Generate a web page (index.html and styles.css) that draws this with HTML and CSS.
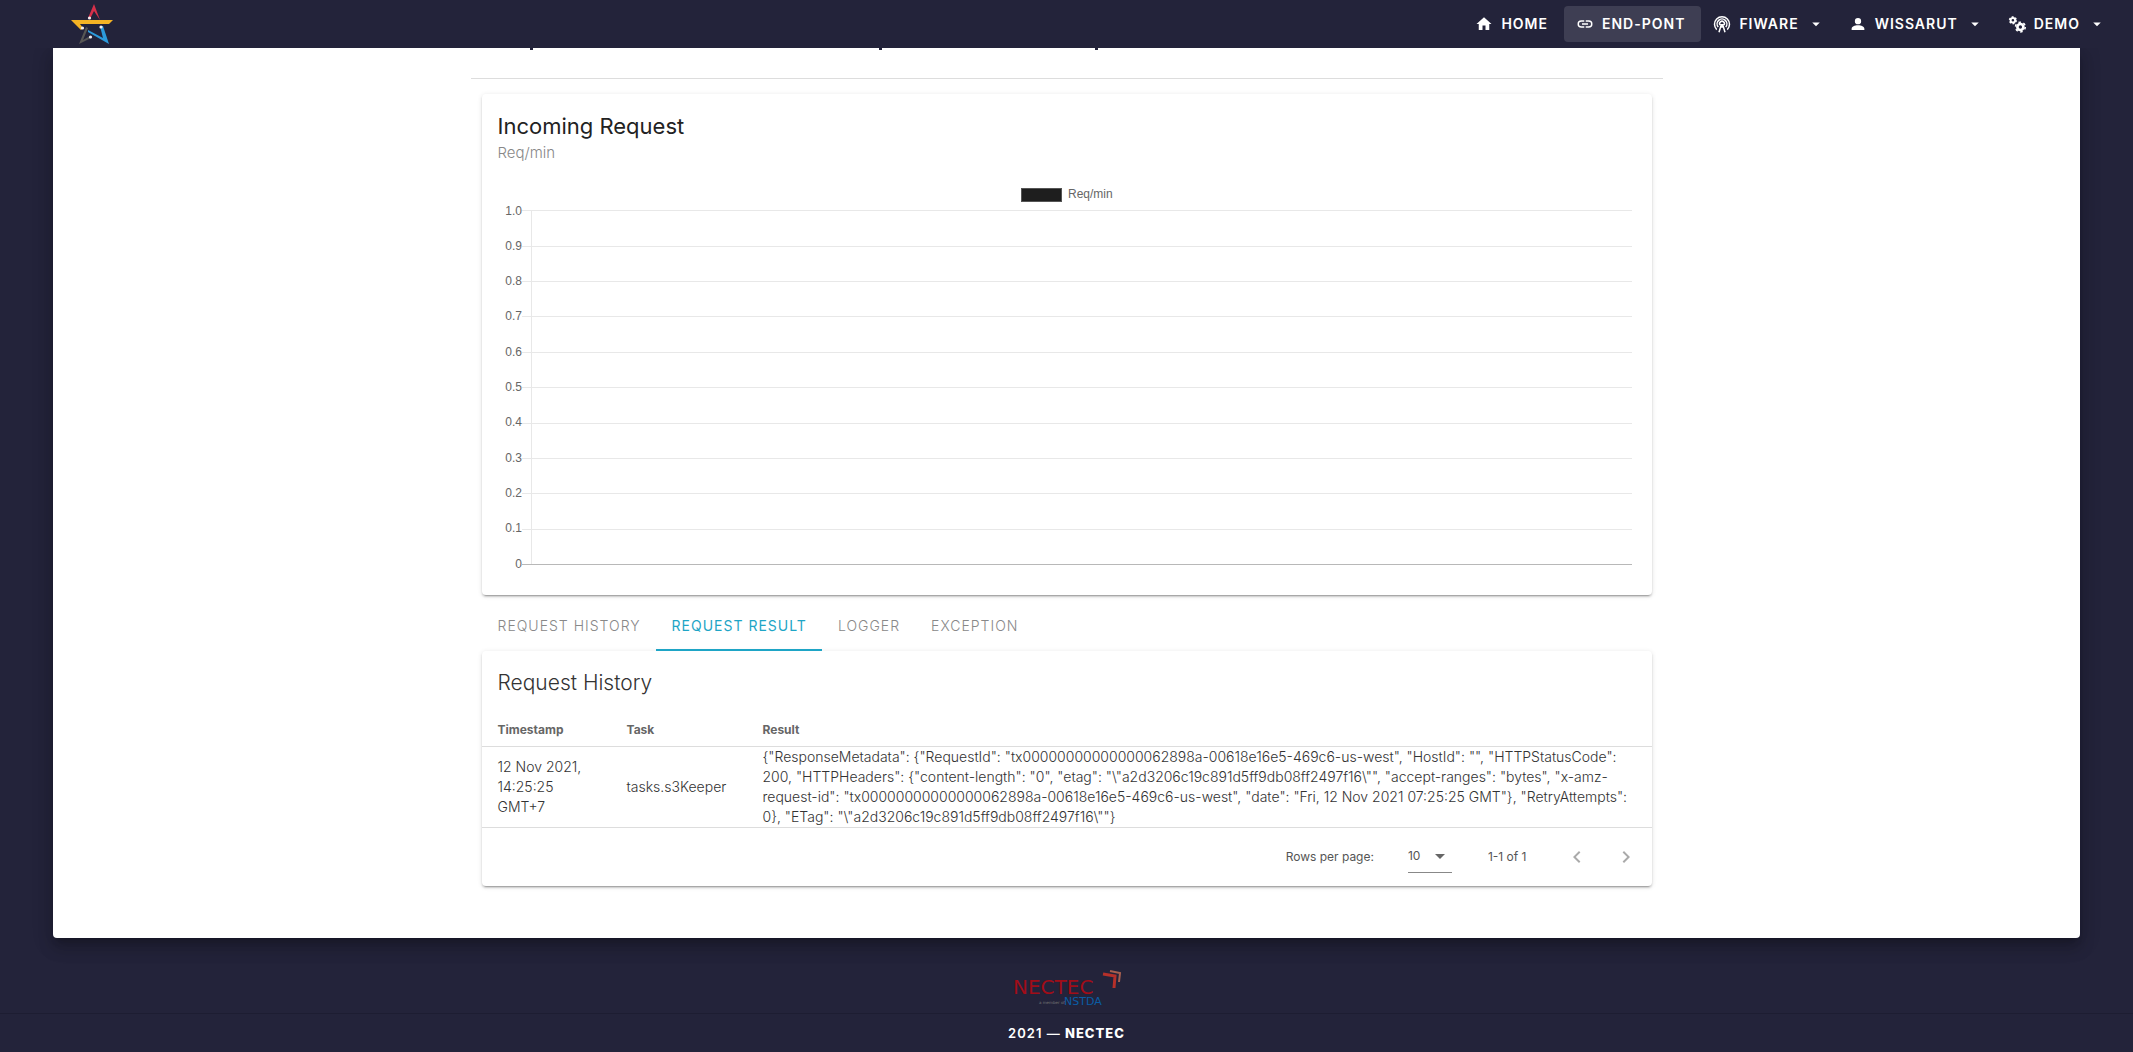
FILE: index.html
```html
<!DOCTYPE html>
<html lang="en">
<head>
<meta charset="utf-8">
<title>End-point</title>
<meta name="viewport" content="width=device-width, initial-scale=1">
<link rel="stylesheet" href="styles.css">
</head>
<body>
<header class="navbar">
  <a class="brand" href="#" aria-label="Start page">
    <svg width="42" height="42" viewBox="0 0 42 42" fill="none">
      <path d="M17 15 23 1l6 16-6-9-4 8z" fill="#d6304a"/>
      <path d="M0 17h42l-4 4H9l3 4-2 2z" fill="#f5b324"/>
      <path d="M15 24 8 41l12-6-1-2-7 4 5-12z" fill="#575654"/>
      <path d="M29 23h3l6 18-21-12v-2l15 8z" fill="#2c9bdc"/>
      <g fill="#f4eef0"><circle cx="18.500" cy="15" r="1.600"/><circle cx="11.500" cy="25" r="1.600"/><circle cx="30" cy="24" r="1.600"/><circle cx="19.500" cy="34" r="1.600"/></g>
    </svg>
  </a>
  <nav class="menu" aria-label="Main">
    <a class="menu-item" href="#">
      <svg class="icon" viewBox="0 0 24 24"><path d="M10 20v-6h4v6h5v-8h3L12 3 2 12h3v8z"/></svg>HOME</a>
    <a class="menu-item active" href="#" aria-current="page">
      <svg class="icon" viewBox="0 0 24 24"><path d="M3.900 12A3.100 3.100 0 0 1 7 8.900h4V7H7a5 5 0 0 0 0 10h4v-1.900H7A3.100 3.100 0 0 1 3.900 12M8 13h8v-2H8zm9-6h-4v1.900h4a3.100 3.100 0 0 1 0 6.200h-4V17h4a5 5 0 0 0 0-10"/></svg>END-PONT</a>
    <button class="menu-item" type="button">
      <svg class="icon" viewBox="0 0 24 24" fill="none" stroke="currentColor" stroke-width="2"><path d="M5 19.500a10 10 0 1 1 14 0M7 16a6.500 6.500 0 1 1 10 0M9.500 13.500a3.200 3.200 0 1 1 5 0M8 23l3-10h2l3 10M12 13v4"/></svg>FIWARE
      <svg class="icon caret" viewBox="0 0 24 24"><path d="m7 10 5 5 5-5z"/></svg></button>
    <button class="menu-item" type="button">
      <svg class="icon" viewBox="0 0 24 24"><path d="M12 4a4.200 4.200 0 1 1 0 8.400A4.200 4.200 0 0 1 12 4m0 9.500c4.500 0 8.500 2 8.500 4.700V20h-17v-1.800c0-2.700 4-4.700 8.500-4.700"/></svg>WISSARUT
      <svg class="icon caret" viewBox="0 0 24 24"><path d="m7 10 5 5 5-5z"/></svg></button>
    <button class="menu-item" type="button">
      <svg class="icon" viewBox="0 0 24 24" fill="none" stroke="currentColor"><circle cx="6.500" cy="7" r="3" stroke-width="2.500"/><circle cx="6.500" cy="7" r="4.500" stroke-width="2" stroke-dasharray="2.400 2.400"/><circle cx="16.500" cy="16" r="4" stroke-width="3.500"/><circle cx="16.500" cy="16" r="6.500" stroke-width="2" stroke-dasharray="3.400 3.400"/></svg>DEMO
      <svg class="icon caret" viewBox="0 0 24 24"><path d="m7 10 5 5 5-5z"/></svg></button>
  </nav>
</header>

<main class="sheet">
  <div class="container">
    <svg class="heading-edge" width="640" height="3" viewBox="0 0 640 3" fill="#23233a" aria-hidden="true"><path d="M59 0h3v2h-3zM408 0h3v2h-3zM624 0h3v2h-3z"/></svg>
    <hr class="rule">
    <section class="card chart-card">
      <h2 class="card-title">Incoming Request</h2>
      <p class="card-subtitle">Req/min</p>
      <svg class="chart" viewBox="0 0 1138 399" role="img" aria-label="Requests per minute">
        <rect x="523.500" y="8.500" width="40" height="13" fill="#1e1e1e" stroke="#555"/>
        <text x="570" y="18">Req/min</text>
        <path class="grid" d="M24 30.500H1134M24 66.500H1134M24 101.500H1134M24 136.500H1134M24 172.500H1134M24 207.500H1134M24 243.500H1134M24 278.500H1134M24 313.500H1134M24 349.500H1134M33.500 30V384"/>
        <path class="baseline" d="M24 384.500H1134"/>
        <g class="ticks">
          <text x="24" y="35">1.0</text><text x="24" y="70">0.9</text><text x="24" y="105">0.8</text><text x="24" y="140">0.7</text><text x="24" y="176">0.6</text><text x="24" y="211">0.5</text><text x="24" y="246">0.4</text><text x="24" y="282">0.3</text><text x="24" y="317">0.2</text><text x="24" y="352">0.1</text><text x="24" y="388">0</text>
        </g>
      </svg>
    </section>

    <div class="tabs" role="tablist">
      <button class="tab" type="button" role="tab">REQUEST HISTORY</button>
      <button class="tab selected" type="button" role="tab" aria-selected="true">REQUEST RESULT</button>
      <button class="tab" type="button" role="tab">LOGGER</button>
      <button class="tab" type="button" role="tab">EXCEPTION</button>
    </div>

    <section class="card">
      <h2 class="table-title">Request History</h2>
      <table class="data">
        <colgroup><col class="col-time"><col class="col-task"><col></colgroup>
        <thead><tr><th scope="col">Timestamp</th><th scope="col">Task</th><th scope="col">Result</th></tr></thead>
        <tbody><tr>
          <td>12 Nov 2021, 14:25:25 GMT+7</td>
          <td>tasks.s3Keeper</td>
          <td class="result">{"ResponseMetadata": {"RequestId": "tx00000000000000062898a-00618e16e5-469c6-us-west", "HostId": "", "HTTPStatusCode": 200, "HTTPHeaders": {"content-length": "0", "etag": "\"a2d3206c19c891d5ff9db08ff2497f16\"", "accept-ranges": "bytes", "x-amz-request-id": "tx00000000000000062898a-00618e16e5-469c6-us-west", "date": "Fri, 12 Nov 2021 07:25:25 GMT"}, "RetryAttempts": 0}, "ETag": "\"a2d3206c19c891d5ff9db08ff2497f16\""}</td>
        </tr></tbody>
      </table>
      <div class="pager">
        <label for="rows">Rows per page:</label>
        <span class="select-wrap">
          <select id="rows"><option>10</option></select>
          <svg class="select-caret" width="24" height="24" viewBox="0 0 24 24"><path d="m7 10 5 5 5-5z"/></svg>
        </span>
        <span class="range">1-1 of 1</span>
        <button class="page-btn" type="button" aria-label="Previous page" disabled><svg width="24" height="24" viewBox="0 0 24 24"><path d="M15.400 16.600 10.800 12l4.600-4.600L14 6l-6 6 6 6z"/></svg></button>
        <button class="page-btn" type="button" aria-label="Next page" disabled><svg width="24" height="24" viewBox="0 0 24 24"><path d="M8.600 16.600 13.200 12 8.600 7.400 10 6l6 6-6 6z"/></svg></button>
      </div>
    </section>
  </div>
</main>

<footer class="footer">
  <div class="footer-logo">
    <svg width="110" height="40" viewBox="0 0 110 40" role="img" aria-label="NECTEC, a member of NSTDA">
      <text class="logo-name" x="1" y="26">NECTEC</text>
      <text class="logo-member" x="27" y="36">a member of</text>
      <text class="logo-parent" x="52" y="37">NSTDA</text>
      <path d="M91 6l12 2-1 12" fill="none" stroke="#b5302a" stroke-width="3"/>
      <path d="M98 3l10 2-1 9" fill="none" stroke="#a8604f" stroke-width="2"/>
    </svg>
  </div>
  <p class="copyright">2021 — <strong>NECTEC</strong></p>
</footer>
</body>
</html>
```
FILE: styles.css
```css
* { box-sizing: border-box; }

body {
  margin: 0;
  background: #23233a;
  color: #333;
  font-family: Inter, "Open Sans", sans-serif;
  font-size: 14px;
  line-height: 20px;
}

h2, p { margin: 0; }
button { border: 0; background: none; font: inherit; color: inherit; cursor: pointer; }

/* Navigation */
.navbar {
  position: sticky;
  top: 0;
  z-index: 2;
  display: flex;
  align-items: center;
  justify-content: space-between;
  height: 48px;
  padding: 0 15px 0 71px;
  background: #23233a;
}
.brand { display: flex; }
.menu { display: flex; }
.menu-item {
  display: flex;
  align-items: center;
  gap: 8px;
  height: 36px;
  padding: 0 16px 0 12px;
  border-radius: 4px;
  color: #fff;
  font-size: 14px;
  font-weight: 600;
  letter-spacing: 1px;
  text-decoration: none;
}
button.menu-item { padding-right: 12px; }
.menu-item.active { background: #3e3e53; }
.icon { width: 18px; height: 18px; fill: currentColor; }
.icon[fill="none"] { fill: none; }

/* Page sheet */
.sheet {
  margin: 0 2.5%;
  padding-bottom: 52px;
  background: #fff;
  border-radius: 0 0 4px 4px;
  box-shadow: 0 6px 7px -4px rgba(0, 0, 0, .2), 0 11px 15px 1px rgba(0, 0, 0, .14), 0 4px 20px 3px rgba(0, 0, 0, .12);
}
.container { max-width: 1192px; margin: 0 auto; }
.heading-edge { display: block; }
.rule { height: 1px; margin: 27px 0 15px; border: 0; background: #ddd; }
.card {
  margin: 0 11px;
  background: #fff;
  border-radius: 4px;
  box-shadow: 0 3px 1px -2px rgba(0, 0, 0, .2), 0 2px 2px rgba(0, 0, 0, .14), 0 1px 5px rgba(0, 0, 0, .12);
}
.chart-card { padding: 16px; }
.card-title { color: #222; font-size: 22px; font-weight: 400; line-height: 32px; }
.card-subtitle { margin-bottom: 16px; color: #888; font-size: 15px; font-weight: 300; line-height: 22px; }

.chart { display: block; width: 100%; font: 12px "Liberation Sans", Arial, sans-serif; fill: #666; }
.grid { stroke: #e8e8e8; fill: none; }
.baseline { stroke: #b8b8b8; }
.ticks { text-anchor: end; }

/* Tabs */
.tabs { display: flex; height: 56px; padding: 0 11px; }
.tab {
  padding: 8px 15px 0 16px;
  border-bottom: 2px solid transparent;
  color: #888;
  font-size: 14px;
  font-weight: 300;
  letter-spacing: 1px;
}
.tab.selected { border-color: #1ea5c6; color: #1ea5c6; font-weight: 400; }

/* Table */
.table-title { padding: 16px; color: #333; font-size: 21px; font-weight: 300; line-height: 32px; }
.data { width: 100%; border-collapse: collapse; table-layout: fixed; }
.col-time { width: 129px; }
.col-task { width: 136px; }
.data th, .data td { padding: 0 16px; border-bottom: 1px solid #ddd; text-align: left; }
.data th { height: 31px; color: #666; font-size: 12px; font-weight: 700; }
.data td { font-weight: 300; }
.data .result { padding-right: 8px; }

.pager {
  display: flex;
  align-items: center;
  justify-content: flex-end;
  height: 58px;
  padding-right: 8px;
  color: #555;
  font-size: 12px;
}
.select-wrap { position: relative; display: flex; margin: 0 36px 0 34px; border-bottom: 1px solid #888; }
.select-wrap select {
  width: 44px;
  height: 32px;
  padding: 0;
  border: 0;
  background: none;
  color: inherit;
  font: inherit;
  appearance: none;
}
.select-caret { position: absolute; top: 4px; right: 0; fill: #666; pointer-events: none; }
.range { margin-right: 32px; }
.page-btn { display: flex; padding: 6px; color: #aaa; }
.page-btn + .page-btn { margin-left: 13px; }
.page-btn svg { fill: currentColor; }

/* Footer */
.footer { color: #fff; text-align: center; }
.footer-logo {
  display: flex;
  align-items: flex-end;
  justify-content: center;
  height: 76px;
  padding-bottom: 5px;
  border-bottom: 1px solid #1d1d32;
}
.logo-name { font: 20px "DejaVu Sans", sans-serif; fill: #a10d18; }
.logo-parent { font: 11px "DejaVu Sans", sans-serif; fill: #0a5ca4; }
.logo-member { font: 4px "DejaVu Sans", sans-serif; fill: #777; }
.copyright { padding: 9px 0 10px; font-size: 13px; font-weight: 600; letter-spacing: 1px; }
.copyright strong { font-weight: 800; }
```
